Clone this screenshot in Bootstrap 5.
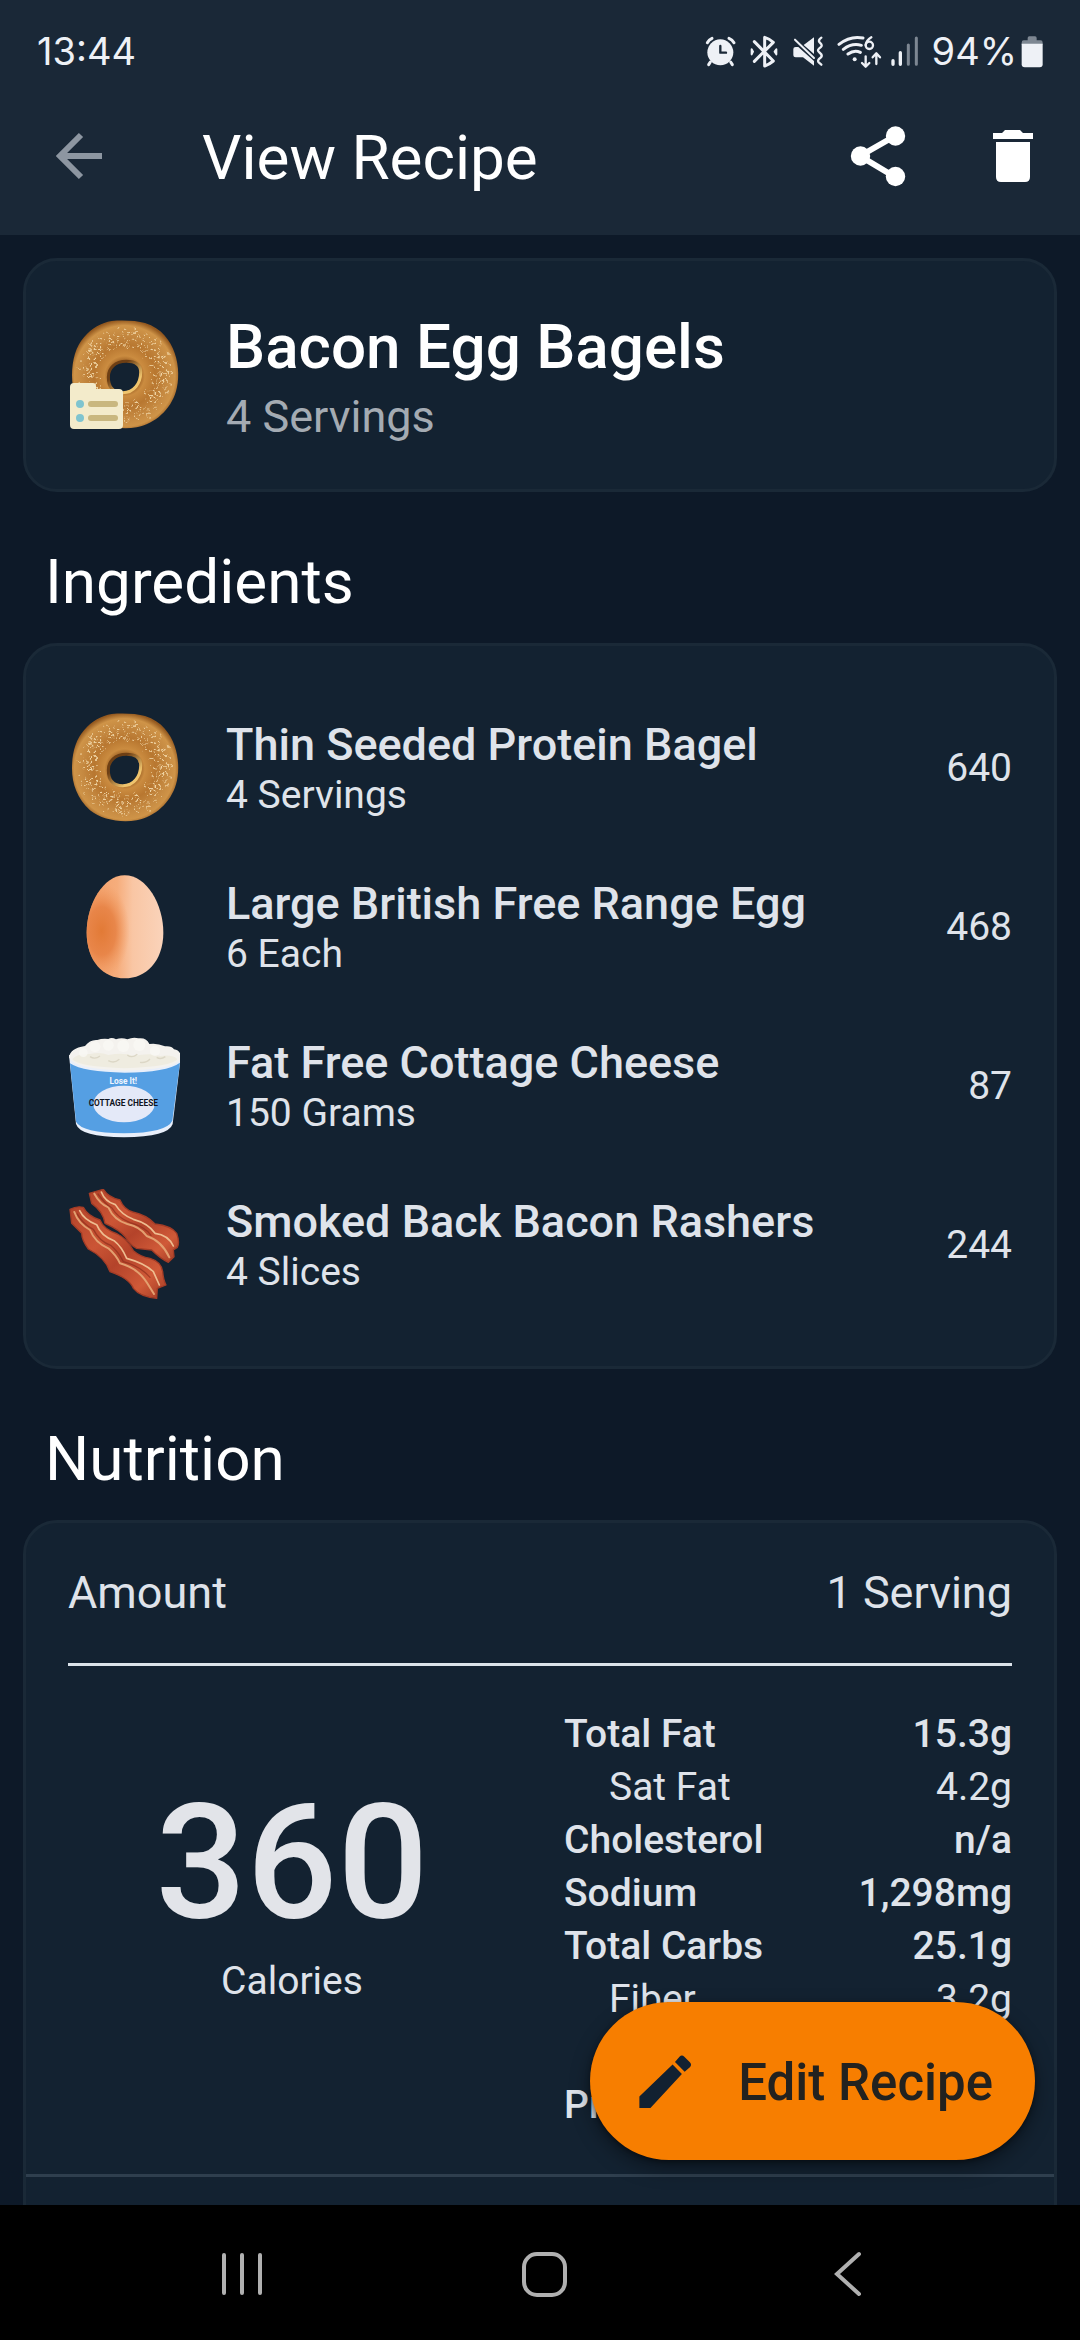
<!DOCTYPE html>
<html lang="en">
<head>
<meta charset="utf-8">
<meta name="viewport" content="width=device-width, initial-scale=1">
<title>View Recipe</title>
<link href="https://cdn.jsdelivr.net/npm/bootstrap@5.3.0/dist/css/bootstrap.min.css" rel="stylesheet">
<style>
  :root { --ink: #dfe3ea; --page: #0d1928; --bar: #1a2837; --panel: #132231; --edge: #1a2937; }
  body { background: var(--page); color: var(--ink); font-family: Roboto, "Liberation Sans", sans-serif; font-size: 39px; line-height: 46px; }
  .top-area { background: var(--bar); padding-bottom: 25px; }
  .status-strip { height: 102px; padding: 0 37px; font-family: Inter, "Liberation Sans", sans-serif; font-size: 38px; color: #eef1f6; }
  .status-text { margin-left: 13px; }
  .app-bar { height: 108px; padding: 0 38px 0 48px; color: #fff; }
  .app-title { font-size: 62px; line-height: 72px; margin-left: 90px; font-weight: 400; }
  .icon-btn { background: none; border: 0; padding: 0; display: flex; }
  .app-bar .icon-btn + .icon-btn { margin-left: 74px; }
  .scroller { min-height: 0; overflow-y: auto; scrollbar-width: none; padding: 23px 23px 0; }
  .scroller::-webkit-scrollbar { display: none; }
  .panel { background: var(--panel); border: 3px solid var(--edge); border-radius: 34px; color: var(--ink); }
  .panel-pad { padding: 42px; }
  .hero { padding: 44px 42px; }
  .hero-name { font-size: 62px; line-height: 84px; font-weight: 500; color: #fff; margin: 0; }
  .hero-sub { font-size: 45px; line-height: 56px; color: #a4abb3; }
  .food-pic { width: 112px; height: 112px; flex: none; }
  .food-gap { gap: 46px; }
  .section-title { font-size: 62px; line-height: 72px; font-weight: 400; color: #fff; margin: 54px 0 25px; padding-left: 22px; }
  .food-row { height: 159px; }
  .food-name { font-size: 45px; line-height: 54px; font-weight: 500; }
  .amount-line { font-size: 45px; line-height: 56px; padding-bottom: 42px; border-bottom: 3px solid #dbe3ea; }
  .facts { padding-top: 42px; display: grid; grid-template-columns: 1fr 1fr; gap: 48px; }
  .calorie-box { padding-bottom: 38px; }
  .calorie-num { font-size: 160px; line-height: 160px; font-weight: 500; color: #e2e4e9; }
  .calorie-cap { line-height: 76px; }
  .fact-table { line-height: 53px; }
  .fact-table th { font-weight: 500; padding: 0; }
  .fact-table td { font-weight: 500; padding: 0; text-align: right; }
  .fact-table .sub-fact th { font-weight: 400; padding-left: 45px; }
  .fact-table .sub-fact td { font-weight: 400; }
  .panel-foot { border-top: 3px solid #2f3f4e; height: 120px; }
  .fab { right: 45px; bottom: 45px; height: 158px; padding: 0 42px 0 48px; gap: 44px; border: 0; border-radius: 79px; background: #f77e00; color: #23221f; font-size: 51px; line-height: 60px; font-weight: 500; box-shadow: 0 8px 20px rgba(0,0,0,.4), 0 2px 5px rgba(0,0,0,.4); }
  .system-nav { background: #000; height: 135px; padding: 0 200px 0 210px; }
</style>
</head>
<body>
<svg width="0" height="0" class="position-absolute" aria-hidden="true">
  <defs>
    <radialGradient id="crust" gradientUnits="userSpaceOnUse" cx="254" cy="264" r="168">
      <stop offset=".24" stop-color="#94591f"/><stop offset=".36" stop-color="#cb8c40"/><stop offset=".55" stop-color="#b87730"/><stop offset=".75" stop-color="#c58941"/><stop offset=".9" stop-color="#cf9448"/><stop offset="1" stop-color="#94591f"/>
    </radialGradient>
    <linearGradient id="holeRim" x1="0" y1="0" x2="1" y2="1"><stop offset=".3" stop-color="#6e3f14"/><stop offset=".75" stop-color="#efc46d"/></linearGradient>
    <filter id="scatter" filterUnits="userSpaceOnUse" x="84" y="93" width="336" height="336"><feTurbulence type="fractalNoise" baseFrequency=".06" numOctaves="2" seed="4"/><feDisplacementMap in="SourceGraphic" scale="36" xChannelSelector="R" yChannelSelector="G"/></filter>
    <symbol id="bagel" viewBox="84 93 336 336">
      <path fill="url(#crust)" fill-rule="evenodd" d="M215 99C250 96 290 98 315 105C365 120 392 160 404 195C418 235 417 280 408 310C392 365 345 408 290 418C240 426 185 416 150 388C112 352 96 310 96 262C96 215 108 175 132 148C155 120 185 104 215 99ZM259 222C225 222 208 240 208 267C208 298 220 312 248 312C282 312 300 285 300 253C300 232 285 222 259 222Z"/>
      <path fill="none" stroke="url(#holeRim)" stroke-width="9" d="M259 220C225 220 205 240 205 267C205 299 220 314 248 314C283 314 302 285 302 253C302 231 286 220 259 220Z"/>
      <g fill="none" stroke="#f6dfb2" stroke-linecap="round" stroke-width="5" filter="url(#scatter)">
        <circle cx="255" cy="258" r="84" stroke-dasharray="1 19 3 27 1 14 2 33" opacity=".75"/>
        <circle cx="255" cy="260" r="95" stroke-dasharray="3 17 1 26 2 13" opacity=".85"/>
        <circle cx="255" cy="260" r="106" stroke-dasharray="1 14 3 21 2 16" opacity=".9"/>
        <circle cx="255" cy="259" r="117" stroke-dasharray="3 16 1 12 2 25" opacity=".85"/>
        <circle cx="255" cy="260" r="128" stroke-dasharray="1 19 3 15 1 27" opacity=".8"/>
        <circle cx="255" cy="260" r="139" stroke-dasharray="2 28 1 21 3 35" opacity=".65"/>
      </g>
    </symbol>
  </defs>
</svg>

<div class="d-flex flex-column vh-100">
  <header class="top-area flex-shrink-0">
    <div class="status-strip d-flex align-items-center">
      <span class="me-auto">13:44</span>
      <svg width="214" height="35" viewBox="72 100 642 105" aria-hidden="true" fill="none" stroke="#eef1f6" stroke-width="9" stroke-linecap="round" stroke-linejoin="round">
        <circle cx="118" cy="155" r="39" fill="#eef1f6" stroke="none"/>
        <path d="M79 126Q84 117 93 113M144 113Q154 117 159 126M88 184L83 192M149 184L154 192"/>
        <path d="M118 136V156H135" stroke="#1a2837" stroke-width="7"/>
        <path d="M220 123L277 181Q265 191 251 196V110Q265 114 277 125L220 182" />
        <path d="M212 146L216 153L212 161ZM286 146L281 153L286 161Z" stroke-width="6"/>
        <path fill="#eef1f6" stroke="none" d="M337 145Q337 139 344 139H352L399 181V195L366 170H344Q337 170 337 164ZM368 133L399 110V160Z"/>
        <path d="M342 117L399 172" stroke-width="6"/>
        <path d="M421 111Q411 118 415 124L421 131Q425 137 415 143Q407 149 415 155L421 161Q425 168 415 174Q408 181 414 186L421 192" stroke-width="7"/>
        <path d="M474 131Q508 104 546 112M487 146Q513 126 541 134M501 160Q520 146 538 155"/>
        <circle cx="521" cy="176" r="6" fill="#eef1f6" stroke="none"/>
        <path d="M571 110Q556 119 554 133" stroke-width="7"/><circle cx="565" cy="134" r="11" stroke-width="7"/>
        <path d="M554 167V197M543 187L554 198L565 187M586 190V159M575 170L586 158L597 170" stroke-width="7"/>
        <path d="M636 180V191M658 156V191" stroke-width="10"/><path d="M682 133V191M706 112V191" stroke="#7d8792" stroke-width="9"/>
      </svg>
      <span class="status-text">94%</span>
      <svg class="ms-1" width="22" height="35" viewBox="1024 100 66 105" aria-hidden="true"><path fill="#7d8792" d="M1044 112Q1044 107 1049 107H1066Q1071 107 1071 112V119H1083Q1089 119 1089 126V132H1026V126Q1026 119 1032 119H1044Z"/><path fill="#eef1f6" d="M1026 129H1089V191Q1089 200 1080 200H1035Q1026 200 1026 191Z"/></svg>
    </div>
    <div class="app-bar d-flex align-items-center">
      <button type="button" class="icon-btn" aria-label="Back">
        <svg width="64" height="64" viewBox="0 0 64 64" fill="none" stroke="#8d96a1" stroke-width="6"><path d="M54 32H13M33 11L12 32L33 53"/></svg>
      </button>
      <h1 class="app-title mb-0 pt-1 me-auto">View Recipe</h1>
      <button type="button" class="icon-btn" aria-label="Share">
        <svg width="64" height="64" viewBox="845 123 64 64" fill="#fff" stroke="#fff"><path fill="none" stroke-width="6" d="M894 135L859 155L894 176"/><g stroke="none"><circle cx="859.500" cy="155" r="9.700"/><circle cx="894.500" cy="135" r="9.700"/><circle cx="894.500" cy="175.500" r="9.700"/></g></svg>
      </button>
      <button type="button" class="icon-btn" aria-label="Delete">
        <svg width="58" height="64" viewBox="983 123 58 64" fill="#fff"><path d="M992 132H1001L1004 129H1019L1022 132H1032V138H992ZM995 141H1029V176Q1029 181 1024 181H1000Q995 181 995 176Z"/></svg>
      </button>
    </div>
  </header>

  <div class="position-relative d-flex flex-column flex-grow-1 overflow-hidden">
    <main class="scroller flex-grow-1">
      <section class="panel hero d-flex align-items-center food-gap">
        <svg class="food-pic" viewBox="0 0 112 112" role="img" aria-label="Bagel recipe"><use href="#bagel" width="112" height="112"/><path fill="#f3ebcb" d="M2 68Q2 64 6 64H25Q28 64 28 67V70H51Q55 70 55 74V106Q55 110 51 110H6Q2 110 2 106Z"/><g fill="#7fc4cf"><circle cx="12" cy="85" r="4"/><circle cx="12" cy="99" r="4"/></g><g fill="#c9b77f"><rect x="20" y="82" width="30" height="6" rx="3"/><rect x="20" y="96" width="30" height="6" rx="3"/></g></svg>
        <div>
          <h2 class="hero-name">Bacon Egg Bagels</h2>
          <div class="hero-sub">4 Servings</div>
        </div>
      </section>

      <h2 class="section-title">Ingredients</h2>
      <ul class="panel panel-pad list-unstyled mb-0">
        <li class="food-row d-flex align-items-center food-gap">
          <svg class="food-pic" role="img" aria-label="Bagel"><use href="#bagel" width="112" height="112"/></svg>
          <div class="flex-grow-1"><div class="food-name">Thin Seeded Protein Bagel</div><div>4 Servings</div></div>
          <span>640</span>
        </li>
        <li class="food-row d-flex align-items-center food-gap">
          <svg class="food-pic" viewBox="84 570 336 336" role="img" aria-label="Egg">
            <defs><linearGradient id="shell"><stop offset="0" stop-color="#f3a06a"/><stop offset=".4" stop-color="#f6ad7c"/><stop offset=".6" stop-color="#f9c6a4"/><stop offset="1" stop-color="#fad3ba"/></linearGradient>
            <radialGradient id="shade" gradientUnits="userSpaceOnUse" cx="0" cy="0" r="1" gradientTransform="translate(185 750) scale(84 145)"><stop offset="0" stop-color="#e27a36"/><stop offset=".5" stop-color="#e68042" stop-opacity=".85"/><stop offset="1" stop-color="#f0975b" stop-opacity="0"/></radialGradient></defs>
            <path fill="url(#shell)" d="M254 583C320 583 370 670 370 755C370 840 318 892 254 892C190 892 140 840 140 755C140 670 190 583 254 583Z"/>
            <path fill="url(#shade)" d="M254 583C320 583 370 670 370 755C370 840 318 892 254 892C190 892 140 840 140 755C140 670 190 583 254 583Z"/>
          </svg>
          <div class="flex-grow-1"><div class="food-name">Large British Free Range Egg</div><div>6 Each</div></div>
          <span>468</span>
        </li>
        <li class="food-row d-flex align-items-center food-gap">
          <svg class="food-pic" viewBox="84 90 336 336" role="img" aria-label="Cottage cheese tub">
            <path fill="#e9effa" d="M87 165H423L398 372Q385 411 252 412Q120 411 108 372Z"/>
            <path fill="#559fe3" d="M90 190Q130 217 254 218Q380 217 420 188L397 362Q380 398 252 400Q125 398 108 365Z"/>
            <path fill="#f4f2ee" d="M87 172Q90 145 135 138Q150 118 172 120Q186 115 205 117Q215 111 228 118Q245 112 262 118Q280 110 295 115Q320 112 328 132Q350 128 375 139Q395 137 402 148Q424 152 423 175Q410 208 254 212Q100 208 87 172Z"/>
            <path fill="#efece0" d="M97 178Q110 160 150 162Q180 154 205 165Q250 156 280 168Q330 158 360 168Q400 163 412 178Q395 200 254 205Q115 200 97 178Z"/>
            <g fill="#faf9f5" opacity=".8"><circle cx="165" cy="140" r="16"/><circle cx="205" cy="136" r="16"/><circle cx="250" cy="138" r="18"/><circle cx="298" cy="135" r="18"/><circle cx="345" cy="153" r="15"/><circle cx="130" cy="158" r="13"/></g>
            <path fill="none" stroke="#dcd7c6" stroke-width="4" d="M150 170Q165 180 180 168M205 182Q222 192 238 178M262 165Q275 176 292 163M300 187Q318 190 330 177M350 172Q362 180 376 170"/>
            <ellipse cx="252" cy="312" rx="92" ry="55" fill="#e4e9f8"/>
            <text x="250" y="252" text-anchor="middle" font-family="Roboto, sans-serif" font-weight="700" font-size="25" fill="#eef5ff">Lose It!</text>
            <text x="250" y="319" text-anchor="middle" font-family="Roboto, sans-serif" font-weight="700" font-size="25" fill="#10151f">COTTAGE CHEESE</text>
          </svg>
          <div class="flex-grow-1"><div class="food-name">Fat Free Cottage Cheese</div><div>150 Grams</div></div>
          <span>87</span>
        </li>
        <li class="food-row d-flex align-items-center food-gap">
          <svg class="food-pic" viewBox="84 567 336 336" role="img" aria-label="Bacon" fill="none" stroke-linecap="round" stroke-linejoin="round">
            <defs><linearGradient id="meat" x2="1" y2="1"><stop offset="0" stop-color="#b3432a"/><stop offset=".35" stop-color="#cb5535"/><stop offset=".55" stop-color="#b4432a"/><stop offset=".8" stop-color="#d05a38"/><stop offset="1" stop-color="#a03a24"/></linearGradient></defs>
            <g fill="url(#meat)" stroke="#a33c26" stroke-width="4">
              <path d="M190 568Q205 592 240 600Q252 628 278 636Q320 645 345 672Q395 678 410 700Q420 728 412 742L400 750L402 770L385 787Q360 775 335 750L290 745Q270 735 257 712Q240 690 195 670Q190 635 155 610L148 580Z"/>
              <path d="M90 628Q110 617 130 622Q143 648 180 660Q190 687 232 702Q260 715 280 752Q300 770 330 775Q364 785 368 815Q370 840 378 855L352 865L350 895Q300 890 280 865Q268 835 210 815Q195 772 145 747Q125 720 125 700L95 670Z"/>
            </g>
            <g stroke="#e3a070" stroke-width="6">
              <path d="M163 581Q180 612 205 622Q222 660 262 672Q300 680 320 708Q365 722 388 772"/>
              <path d="M103 636Q115 670 150 690Q165 728 205 745Q228 765 240 790Q295 805 322 850L342 882"/>
            </g>
            <g stroke="#eebd90" stroke-width="5">
              <path d="M184 576Q195 605 226 614Q245 645 280 658Q325 670 345 700Q385 705 400 738"/>
              <path d="M119 632Q132 660 170 674Q183 708 222 722Q245 740 260 775Q315 790 340 815L358 855"/>
            </g>
            <g stroke="#8e2f1d" stroke-width="4" opacity=".7">
              <path d="M174 582Q195 612 216 624Q232 652 270 668Q315 680 333 706"/>
              <path d="M112 642Q128 672 160 688Q178 724 212 736Q235 755 250 785Q300 798 330 832"/>
            </g>
          </svg>
          <div class="flex-grow-1"><div class="food-name">Smoked Back Bacon Rashers</div><div>4 Slices</div></div>
          <span>244</span>
        </li>
      </ul>

      <h2 class="section-title">Nutrition</h2>
      <section class="panel">
        <div class="panel-pad">
          <div class="amount-line d-flex justify-content-between"><span>Amount</span><span>1 Serving</span></div>
          <div class="facts">
            <div class="calorie-box d-flex flex-column justify-content-center text-center">
              <div class="calorie-num">360</div>
              <div class="calorie-cap">Calories</div>
            </div>
            <table class="fact-table w-100">
              <tbody>
                <tr><th scope="row">Total Fat</th><td>15.3g</td></tr>
                <tr class="sub-fact"><th scope="row">Sat Fat</th><td>4.2g</td></tr>
                <tr><th scope="row">Cholesterol</th><td>n/a</td></tr>
                <tr><th scope="row">Sodium</th><td>1,298mg</td></tr>
                <tr><th scope="row">Total Carbs</th><td>25.1g</td></tr>
                <tr class="sub-fact"><th scope="row">Fiber</th><td>3.2g</td></tr>
                <tr class="sub-fact"><th scope="row">Sugars</th><td></td></tr>
                <tr><th scope="row">Protein</th><td></td></tr>
              </tbody>
            </table>
          </div>
        </div>
        <div class="panel-foot"></div>
      </section>
    </main>
    <button type="button" class="fab position-absolute d-flex align-items-center">
      <svg width="56" height="56" viewBox="284 310 162 162" fill="#122131" aria-hidden="true"><path d="M288 436L384 343L411 371L320 469H288ZM391 336L404 321Q411 314 418 321L434 337Q441 344 434 351L419 364Z"/></svg>
      <span class="pt-1">Edit Recipe</span>
    </button>
  </div>

  <nav class="system-nav flex-shrink-0 d-flex justify-content-between align-items-center" aria-label="System">
    <button type="button" class="icon-btn" aria-label="Recents"><svg width="64" height="64" viewBox="0 0 64 64" stroke="#b0b0b0" stroke-width="4" stroke-linecap="round"><path d="M14 14V52M32 14V52M50 14V52"/></svg></button>
    <button type="button" class="icon-btn" aria-label="Home"><svg width="64" height="64" viewBox="0 0 64 64" fill="none" stroke="#b0b0b0" stroke-width="4"><rect x="11" y="13" width="41" height="41" rx="13"/></svg></button>
    <button type="button" class="icon-btn" aria-label="Back"><svg width="64" height="64" viewBox="0 0 64 64" fill="none" stroke="#b0b0b0" stroke-width="4" stroke-linecap="round"><path d="M43 13L21 33L43 53"/></svg></button>
  </nav>
</div>
<script src="https://cdn.jsdelivr.net/npm/bootstrap@5.3.0/dist/js/bootstrap.bundle.min.js"></script>
</body>
</html>
